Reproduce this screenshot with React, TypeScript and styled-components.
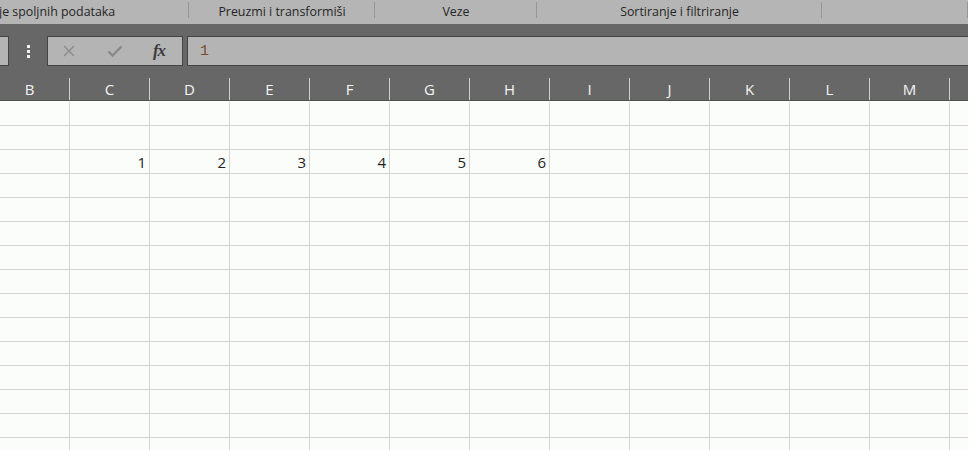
import React from "react";
import styled, { createGlobalStyle } from "styled-components";

const Global = createGlobalStyle`
  html, body { margin: 0; padding: 0; background: #fbfdfb; overflow: hidden; }
  body { width: 968px; height: 450px; font-family: "Open Sans", "Noto Sans", sans-serif; }
`;

const Page = styled.div`
  width: 968px;
  height: 450px;
  overflow: hidden;
  display: flex;
  flex-direction: column;
`;

const Ribbon = styled.div`
  height: 24px;
  background: #b5b5b5;
  display: flex;
  flex: none;
`;

const Group = styled.div<{ $w: number; $align?: string }>`
  width: ${(p) => p.$w}px;
  flex: none;
  display: flex;
  align-items: center;
  justify-content: ${(p) => p.$align || "center"};
  position: relative;
  font-size: 12.4px;
  color: #262626;
  white-space: nowrap;
  &::after {
    content: "";
    position: absolute;
    right: 0;
    top: 2px;
    height: 16px;
    width: 1px;
    background: #979797;
  }
`;

const GroupLabel = styled.span<{ $shift?: number }>`
  margin-left: ${(p) => p.$shift || 0}px;
  margin-top: -2px;
`;

const Dark = styled.div`
  background: #676767;
  display: flex;
  flex-direction: column;
  flex: none;
  height: 77px;
  border-bottom: 1px solid #4e4e4e;
  box-sizing: border-box;
`;

const FormulaRow = styled.div`
  display: flex;
  align-items: stretch;
  height: 30px;
  margin-top: 12px;
`;

const BoxBase = styled.div`
  background: #b4b4b4;
  border: 1px solid #454545;
  box-sizing: border-box;
  height: 30px;
`;

const NameBox = styled(BoxBase)`
  width: 9px;
  border-left: none;
`;

const Dots = styled.div`
  width: 38px;
  display: flex;
  flex-direction: column;
  align-items: center;
  justify-content: center;
  gap: 2px;
`;

const Dot = styled.span`
  width: 3px;
  height: 3px;
  background: #f2f2f2;
`;

const IconBox = styled(BoxBase)`
  width: 136px;
  display: flex;
  align-items: center;
  position: relative;
`;

const IconSlot = styled.span<{ $x: number }>`
  position: absolute;
  left: ${(p) => p.$x}px;
  top: 50%;
  transform: translate(-50%, -50%);
  display: flex;
`;

const Fx = styled.span`
  font-family: "Liberation Serif", "DejaVu Serif", serif;
  font-style: italic;
  font-weight: bold;
  font-size: 17px;
  color: #3c3c3c;
  letter-spacing: -1px;
`;

const FormulaBox = styled(BoxBase)`
  flex: 1;
  margin-left: 4px;
  border-right: none;
  display: flex;
  align-items: center;
  padding-left: 12px;
  font-family: "Liberation Mono", "DejaVu Sans Mono", monospace;
  font-size: 15px;
  color: #7b4a2e;
`;

const HeaderRow = styled.div`
  display: flex;
  margin-top: 12px;
  margin-left: -10px;
  height: 22px;
`;

const HeadCell = styled.div`
  width: 80px;
  flex: none;
  box-sizing: border-box;
  border-right: 1px solid #cfcfcf;
  display: flex;
  align-items: center;
  justify-content: center;
  color: #f4f4f4;
  font-size: 15px;
  padding-bottom: 1px;
`;

const Grid = styled.div`
  flex: 1;
  padding-top: 1px;
  background: #fbfdfb;
`;

const Row = styled.div`
  display: flex;
  height: 24px;
  margin-left: -10px;
  box-sizing: border-box;
  border-bottom: 1px solid #d4d4d4;
`;

const Cell = styled.div`
  width: 80px;
  flex: none;
  box-sizing: border-box;
  border-right: 1px solid #d4d4d4;
  display: flex;
  align-items: center;
  justify-content: flex-end;
  padding-right: 3px;
  font-size: 15px;
  color: #1e1e1e;
`;

const cols = ["B", "C", "D", "E", "F", "G", "H", "I", "J", "K", "L", "M", ""];

const values: Record<number, Record<number, string>> = {
  2: { 1: "1", 2: "2", 3: "3", 4: "4", 5: "5", 6: "6" },
};

export default function App() {
  const rows = Array.from({ length: 15 }, (_, i) => i);
  return (
    <Page>
      <Global />
      <Ribbon>
        <Group $w={189} $align="flex-start">
          <GroupLabel $shift={-1}>je spoljnih podataka</GroupLabel>
        </Group>
        <Group $w={186}>
          <GroupLabel>Preuzmi i transformiši</GroupLabel>
        </Group>
        <Group $w={162}>
          <GroupLabel>Veze</GroupLabel>
        </Group>
        <Group $w={285}>
          <GroupLabel>Sortiranje i filtriranje</GroupLabel>
        </Group>
        <Group $w={146} />
      </Ribbon>
      <Dark>
        <FormulaRow>
          <NameBox />
          <Dots>
            <Dot />
            <Dot />
            <Dot />
          </Dots>
          <IconBox>
            <IconSlot $x={21}>
              <svg width="14" height="14" viewBox="0 0 14 14">
                <path d="M2 2 L12 12 M12 2 L2 12" stroke="#8a8a8a" strokeWidth="1.4" fill="none" />
              </svg>
            </IconSlot>
            <IconSlot $x={67}>
              <svg width="16" height="14" viewBox="0 0 16 14">
                <path d="M1.5 7.5 L5.5 11.5 L14.5 2.5" stroke="#8a8a8a" strokeWidth="2.4" fill="none" />
              </svg>
            </IconSlot>
            <IconSlot $x={111}>
              <Fx>fx</Fx>
            </IconSlot>
          </IconBox>
          <FormulaBox>1</FormulaBox>
        </FormulaRow>
        <HeaderRow>
          {cols.map((c, i) => (
            <HeadCell key={i}>{c}</HeadCell>
          ))}
        </HeaderRow>
      </Dark>
      <Grid>
        {rows.map((r) => (
          <Row key={r}>
            {cols.map((_, i) => (
              <Cell key={i}>{values[r]?.[i] ?? ""}</Cell>
            ))}
          </Row>
        ))}
      </Grid>
    </Page>
  );
}
